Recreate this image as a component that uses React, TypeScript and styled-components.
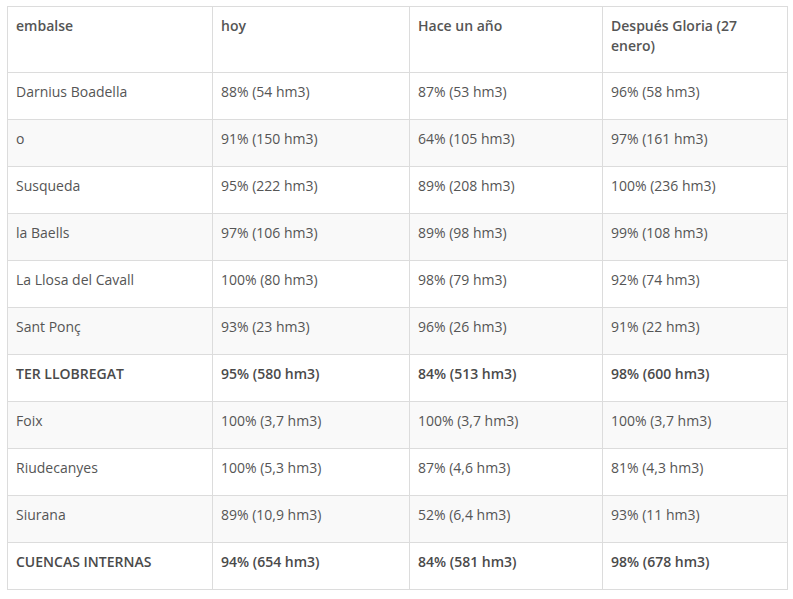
import React from "react";
import styled, { createGlobalStyle } from "styled-components";

const Global = createGlobalStyle`
  html, body { margin: 0; padding: 0; background: #fff; }
  body { font-family: "Open Sans", "Noto Sans", sans-serif; }
  *, *::before, *::after { box-sizing: border-box; }
`;

const Wrap = styled.div`
  padding: 6px 7px 0 7px;
`;

const Table = styled.table`
  width: 780px;
  border-collapse: collapse;
  table-layout: fixed;
  font-size: 14px;
  line-height: 20px;
  color: #555;
`;

const Col = styled.col<{ $w: number }>`
  width: ${(p) => p.$w}px;
`;

const Th = styled.th`
  text-align: left;
  vertical-align: top;
  font-weight: 600;
  color: #555;
  padding: 9px 8px 16px 8px;
  border: 1px solid #dcdcdc;
`;

const Row = styled.tr<{ $striped: boolean }>`
  background: ${(p) => (p.$striped ? "#f9f9f9" : "#fff")};
`;

const Td = styled.td<{ $bold: boolean }>`
  padding: 9px 8px 17px 8px;
  border: 1px solid #dcdcdc;
  vertical-align: top;
  font-weight: ${(p) => (p.$bold ? 600 : 400)};
  color: ${(p) => (p.$bold ? "#4a4a4a" : "#555")};
`;

const headers: [string, number][] = [
  ["embalse", 205],
  ["hoy", 197],
  ["Hace un año", 193],
  ["Después Gloria (27 enero)", 185],
];

const rows: { c: string[]; bold?: boolean }[] = [
  { c: ["Darnius Boadella", "88% (54 hm3)", "87% (53 hm3)", "96% (58 hm3)"] },
  { c: ["o", "91% (150 hm3)", "64% (105 hm3)", "97% (161 hm3)"] },
  { c: ["Susqueda", "95% (222 hm3)", "89% (208 hm3)", "100% (236 hm3)"] },
  { c: ["la Baells", "97% (106 hm3)", "89% (98 hm3)", "99% (108 hm3)"] },
  { c: ["La Llosa del Cavall", "100% (80 hm3)", "98% (79 hm3)", "92% (74 hm3)"] },
  { c: ["Sant Ponç", "93% (23 hm3)", "96% (26 hm3)", "91% (22 hm3)"] },
  { c: ["TER LLOBREGAT", "95% (580 hm3)", "84% (513 hm3)", "98% (600 hm3)"], bold: true },
  { c: ["Foix", "100% (3,7 hm3)", "100% (3,7 hm3)", "100% (3,7 hm3)"] },
  { c: ["Riudecanyes", "100% (5,3 hm3)", "87% (4,6 hm3)", "81% (4,3 hm3)"] },
  { c: ["Siurana", "89% (10,9 hm3)", "52% (6,4 hm3)", "93% (11 hm3)"] },
  { c: ["CUENCAS INTERNAS", "94% (654 hm3)", "84% (581 hm3)", "98% (678 hm3)"], bold: true },
];

export default function App() {
  return (
    <Wrap>
      <Global />
      <Table>
        <colgroup>
          {headers.map(([h, w]) => (
            <Col key={h} $w={w} />
          ))}
        </colgroup>
        <thead>
          <tr>
            {headers.map(([h]) => (
              <Th key={h}>{h}</Th>
            ))}
          </tr>
        </thead>
        <tbody>
          {rows.map((r, i) => (
            <Row key={i} $striped={i % 2 === 1}>
              {r.c.map((c, j) => (
                <Td key={j} $bold={!!r.bold}>
                  {c}
                </Td>
              ))}
            </Row>
          ))}
        </tbody>
      </Table>
    </Wrap>
  );
}
